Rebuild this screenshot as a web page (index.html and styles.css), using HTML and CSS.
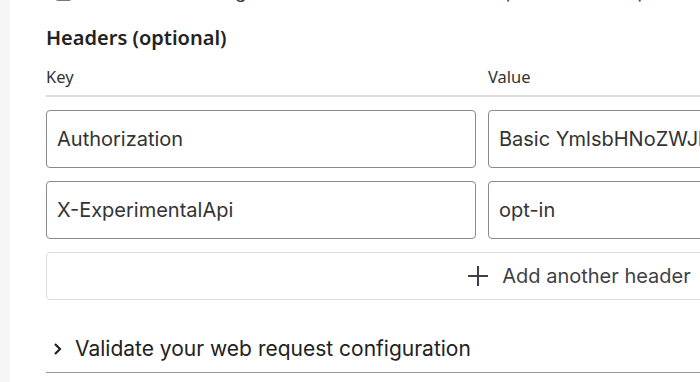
FILE: index.html
```html
<!DOCTYPE html>
<html lang="en">
<head>
  <meta charset="UTF-8">
  <title>Web request headers</title>
  <link rel="stylesheet" href="styles.css">
</head>
<body>
  <div class="rail"></div>
  <div class="content">
    <label class="check-row">
      <span class="checkbox"></span>
      <span>Use Windows integrated authentication for the request to the endpoint</span>
    </label>

    <h2 class="section-title">Headers (optional)</h2>

    <div class="grid-head">
      <div class="col-label">Key</div>
      <div class="col-label">Value</div>
    </div>

    <div class="headers-grid">
      <div class="field">Authorization</div>
      <div class="field">Basic YmlsbHNoZWJhOnBhc3N3b3Jk</div>

      <div class="field">X-ExperimentalApi</div>
      <div class="field">opt-in</div>

      <button class="add-btn">
        <svg width="22" height="22" viewBox="0 0 22 22" fill="none" stroke="#3f3f46" stroke-width="2">
          <path d="M11 1v20M1 11h20"/>
        </svg>
        <span>Add another header</span>
      </button>
    </div>

    <div class="expander">
      <svg width="12" height="14" viewBox="0 0 12 14" fill="none" stroke="#222" stroke-width="2.2">
        <path d="M3 2l5 5-5 5"/>
      </svg>
      <span>Validate your web request configuration</span>
    </div>
  </div>
</body>
</html>
```

FILE: styles.css
```css
:root {
  --rail-bg: #f6f6f6;
  --text-strong: #222;
  --text-primary: #333;
  --field-border: #8a8a8a;
  --soft-border: #dcdcdc;
}

* {
  margin: 0;
  padding: 0;
  box-sizing: border-box;
}

html, body {
  height: 100%;
  overflow: hidden;
}

body {
  display: flex;
  background: #fff;
  font-family: Inter, "Noto Sans", sans-serif;
  color: var(--text-primary);
}

.rail {
  width: 10px;
  flex-shrink: 0;
  background-color: var(--rail-bg);
}

.content {
  padding-left: 36px;
  width: 1110px;
  flex-shrink: 0;
}

/* row scrolled mostly out of view, only its bottom edge shows */
.check-row {
  display: flex;
  align-items: center;
  gap: 10px;
  margin-top: -19px;
  padding-left: 9px;
  height: 20px;
  font-size: 18px;
  color: var(--text-primary);
}

.checkbox {
  width: 17px;
  height: 17px;
  margin-top: 3px;
  border: 1.5px solid #777;
  border-radius: 3px;
}

.section-title {
  font-family: "Noto Sans", sans-serif;
  font-size: 20px;
  font-weight: 600;
  color: var(--text-strong);
  margin-top: 25px;
  line-height: 24px;
}

.grid-head {
  display: grid;
  grid-template-columns: 430px 624px;
  column-gap: 12px;
  margin-top: 17px;
  padding-bottom: 8px;
  border-bottom: 2px solid var(--soft-border);
}

.col-label {
  font-family: "Noto Sans", sans-serif;
  font-size: 16.5px;
  color: var(--text-primary);
  line-height: 20px;
}

.headers-grid {
  display: grid;
  grid-template-columns: 430px 624px;
  column-gap: 12px;
  row-gap: 13px;
  margin-top: 13px;
}

.field {
  height: 58px;
  border: 1px solid var(--field-border);
  border-radius: 4px;
  padding: 0 10px;
  display: flex;
  align-items: center;
  font-size: 20px;
  color: var(--text-primary);
  white-space: nowrap;
  overflow: hidden;
}

.add-btn {
  grid-column: 1 / -1;
  height: 48px;
  border: 1px solid var(--soft-border);
  border-radius: 4px;
  background: #fff;
  display: flex;
  align-items: center;
  justify-content: center;
  gap: 13px;
  font-family: Inter, sans-serif;
  font-size: 20px;
  color: #3f3f46;
}

.expander {
  display: flex;
  align-items: center;
  gap: 11px;
  margin-top: 36px;
  padding: 0 0 11px 6px;
  border-bottom: 1px solid #999;
  font-size: 21px;
  color: var(--text-strong);
}
```
